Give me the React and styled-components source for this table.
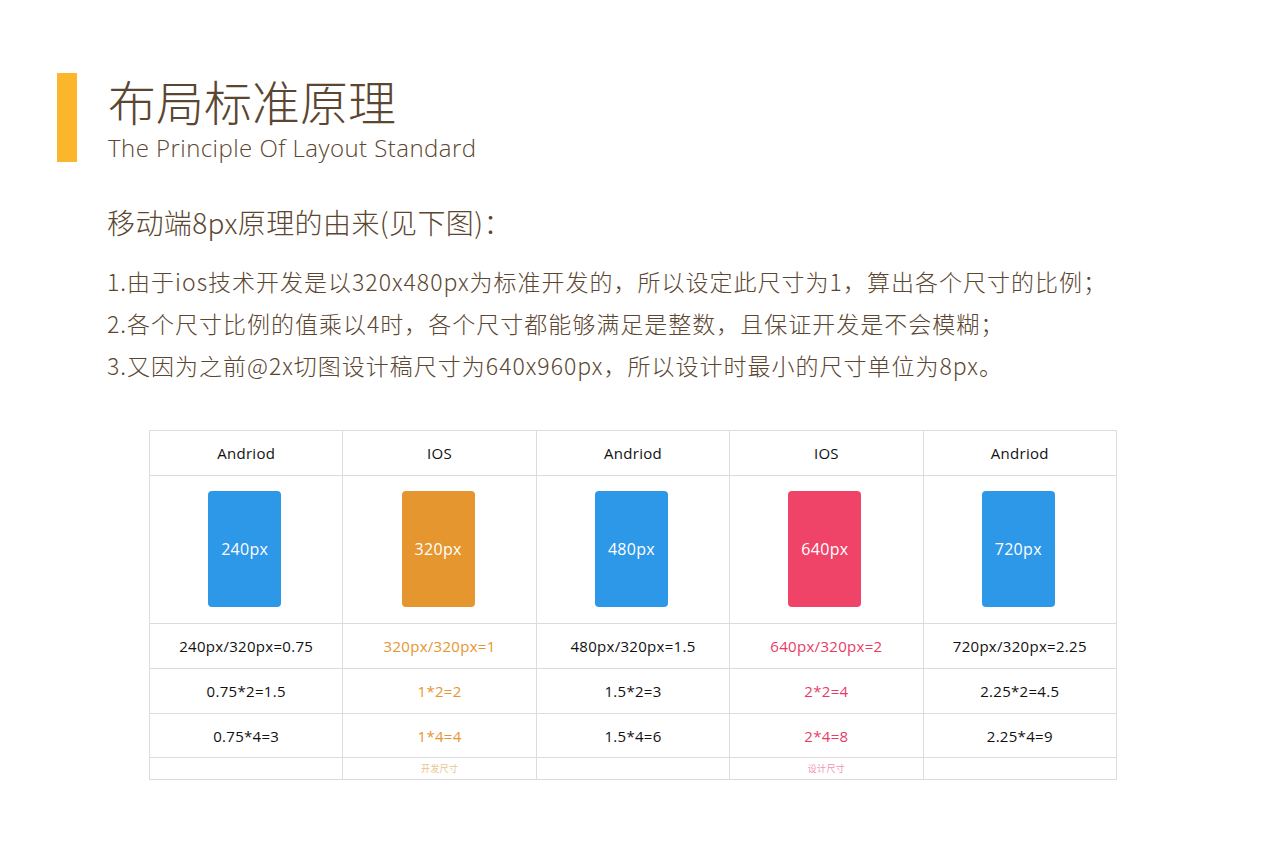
import React from "react"
import { createGlobalStyle } from "styled-components"
import styled from "styled-components"

const GlobalStyle = createGlobalStyle`
  html, body {
    margin: 0;
    padding: 0;
    background: #fff;
  }
  body {
    font-family: "Noto Sans CJK SC", "Noto Sans", sans-serif;
  }
`

const Page = styled.div`
  width: 1280px;
  height: 846px;
  box-sizing: border-box;
  padding: 73px 0 0 57px;
  color: #5b4631;
`

const Header = styled.header`
  display: flex;
  gap: 31px;
`

const Bar = styled.div`
  width: 20px;
  height: 89px;
  background: #fbb62c;
`

const TitleBlock = styled.div`
  display: flex;
  flex-direction: column;
`

const Title = styled.h1`
  margin: 0;
  font-size: 48px;
  font-weight: 300;
  line-height: 54px;
  letter-spacing: 0;
`

const Subtitle = styled.div`
  font-family: "Open Sans", "Liberation Sans", sans-serif;
  font-weight: 300;
  font-size: 24px;
  line-height: 30px;
  letter-spacing: 0.45px;
  margin-top: 6px;
`

const Section = styled.section`
  padding-left: 50px;
  margin-top: 39px;
`

const Lead = styled.h2`
  margin: 0;
  font-size: 28px;
  font-weight: 300;
  line-height: 40px;
  letter-spacing: 0.4px;
`

const Points = styled.div`
  margin-top: 18px;
  display: flex;
  flex-direction: column;
  font-size: 23px;
  line-height: 42px;
  font-weight: 300;
  letter-spacing: 1px;
`

const Grid = styled.div`
  margin: 44px 0 0 92px;
  width: 967px;
  display: grid;
  grid-template-columns: repeat(5, 1fr);
  grid-template-rows: 45px 148px 45px 45px 44px 22px;
  border-top: 1px solid #dcdcdc;
  border-left: 1px solid #dcdcdc;
  font-family: "Open Sans", "Lato", sans-serif;
  letter-spacing: 0.3px;
`

const Cell = styled.div`
  border-right: 1px solid #dcdcdc;
  border-bottom: 1px solid #dcdcdc;
  display: flex;
  align-items: center;
  justify-content: center;
  font-size: ${p => (p.$small ? "9px" : "15px")};
  color: ${p => p.$tone === "orange" ? (p.$small ? "#e9c58d" : "#e5962e")
    : p.$tone === "pink" ? (p.$small ? "#f096ad" : "#ea3a66")
    : "#111"};
  font-family: ${p => (p.$small ? '"Noto Sans CJK SC", sans-serif' : "inherit")};
`

const Phone = styled.div`
  width: 73px;
  height: 116px;
  border-radius: 4px;
  background: ${p => p.$color};
  color: #fff;
  display: flex;
  align-items: center;
  justify-content: center;
  font-size: 16px;
  margin: 0 3px 2px 0;
`

const columns = [
  { os: "Andriod", px: "240px", color: "#2d97e8", ratio: "240px/320px=0.75", x2: "0.75*2=1.5", x4: "0.75*4=3" },
  { os: "IOS", px: "320px", color: "#e5962e", tone: "orange", ratio: "320px/320px=1", x2: "1*2=2", x4: "1*4=4", note: "开发尺寸" },
  { os: "Andriod", px: "480px", color: "#2d97e8", ratio: "480px/320px=1.5", x2: "1.5*2=3", x4: "1.5*4=6" },
  { os: "IOS", px: "640px", color: "#ef4468", tone: "pink", ratio: "640px/320px=2", x2: "2*2=4", x4: "2*4=8", note: "设计尺寸" },
  { os: "Andriod", px: "720px", color: "#2d97e8", ratio: "720px/320px=2.25", x2: "2.25*2=4.5", x4: "2.25*4=9" },
]

const App = () => {
  return (
    <Page>
      <GlobalStyle />
      <Header>
        <Bar />
        <TitleBlock>
          <Title>布局标准原理</Title>
          <Subtitle>The Principle Of Layout Standard</Subtitle>
        </TitleBlock>
      </Header>

      <Section>
        <Lead>移动端8px原理的由来(见下图)：</Lead>
        <Points>
          <div>1.由于ios技术开发是以320x480px为标准开发的，所以设定此尺寸为1，算出各个尺寸的比例；</div>
          <div>2.各个尺寸比例的值乘以4时，各个尺寸都能够满足是整数，且保证开发是不会模糊；</div>
          <div>3.又因为之前@2x切图设计稿尺寸为640x960px，所以设计时最小的尺寸单位为8px。</div>
        </Points>
      </Section>

      <Grid>
        {columns.map((c, i) => <Cell key={"os" + i}>{c.os}</Cell>)}
        {columns.map((c, i) => (
          <Cell key={"ph" + i}><Phone $color={c.color}>{c.px}</Phone></Cell>
        ))}
        {columns.map((c, i) => <Cell key={"r" + i} $tone={c.tone}>{c.ratio}</Cell>)}
        {columns.map((c, i) => <Cell key={"a" + i} $tone={c.tone}>{c.x2}</Cell>)}
        {columns.map((c, i) => <Cell key={"b" + i} $tone={c.tone}>{c.x4}</Cell>)}
        {columns.map((c, i) => <Cell key={"n" + i} $tone={c.tone} $small>{c.note}</Cell>)}
      </Grid>
    </Page>
  )
}

export default App
